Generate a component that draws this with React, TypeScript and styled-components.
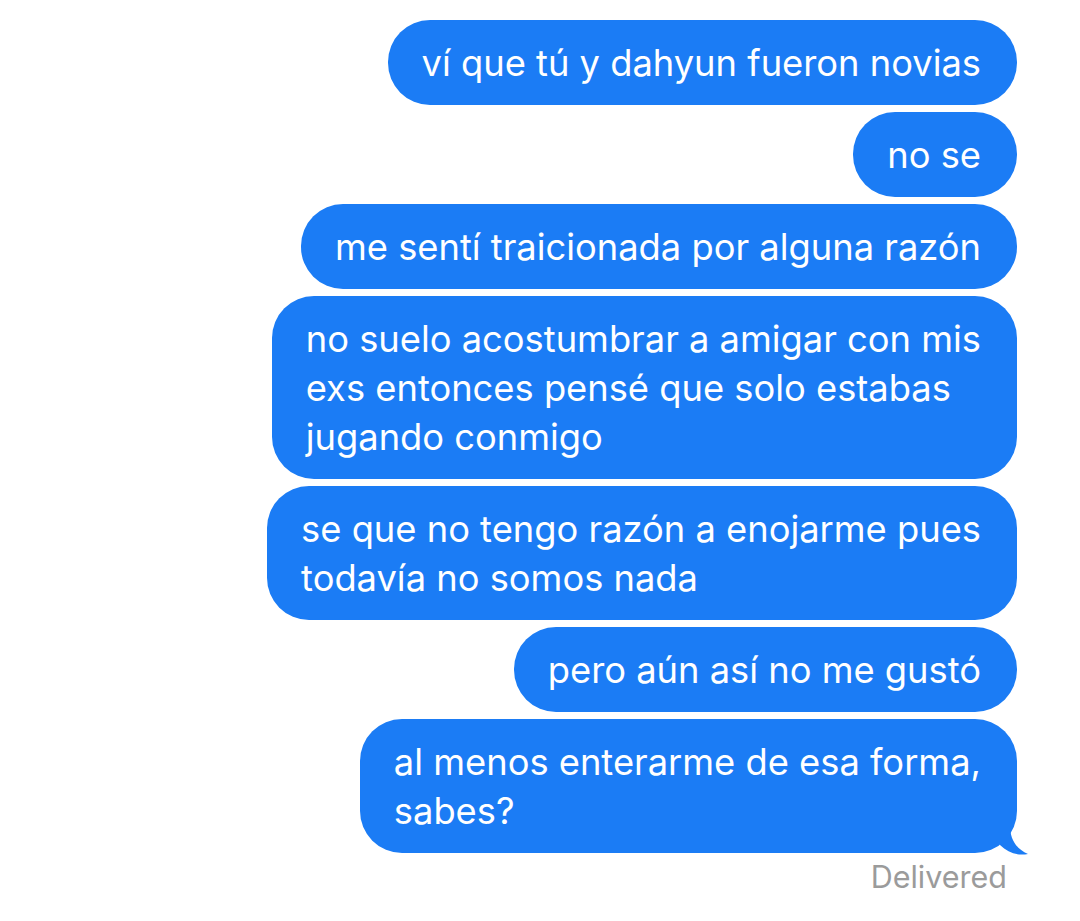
import React from "react";
import styled, { createGlobalStyle } from "styled-components";

const messages = [
  "ví que tú y dahyun fueron novias",
  "no se",
  "me sentí traicionada por alguna razón",
  "no suelo acostumbrar a amigar con mis\nexs entonces pensé que solo estabas\njugando conmigo",
  "se que no tengo razón a enojarme pues\ntodavía no somos nada",
  "pero aún así no me gustó",
  "al menos enterarme de esa forma,\nsabes?",
];

export default function App() {
  return (
    <>
      <GlobalStyle />
      <Thread>
        {messages.map((text, i) => (
          <Bubble key={i}>
            {text}
            {i === messages.length - 1 && (
              <Tail width="30" height="30" viewBox="0 0 30 30">
                <path d="M0 0 L10 0 C10 14 16 24 28 29 C18 31 8 28 0 20 Z" fill="#1b7cf5" />
              </Tail>
            )}
          </Bubble>
        ))}
        <Status>Delivered</Status>
      </Thread>
    </>
  );
}

const GlobalStyle = createGlobalStyle`
  body {
    margin: 0;
    background: #ffffff;
    font-family: "Inter", "Roboto", sans-serif;
  }
`;

const Thread = styled.div`
  display: flex;
  flex-direction: column;
  align-items: flex-end;
  gap: 7px;
  padding: 20px 63px 0 0;
`;

const Bubble = styled.div`
  position: relative;
  background: #1b7cf5;
  color: #ffffff;
  font-size: 36.3px;
  line-height: 49px;
  white-space: pre-line;
  padding: 19px 36px 17px 34px;
  border-radius: 42px;
`;

const Tail = styled.svg`
  position: absolute;
  right: -13px;
  bottom: -2px;
`;

const Status = styled.div`
  margin-top: 0;
  padding-right: 10px;
  font-size: 30.5px;
  line-height: 34px;
  color: #9b9b9b;
`;
